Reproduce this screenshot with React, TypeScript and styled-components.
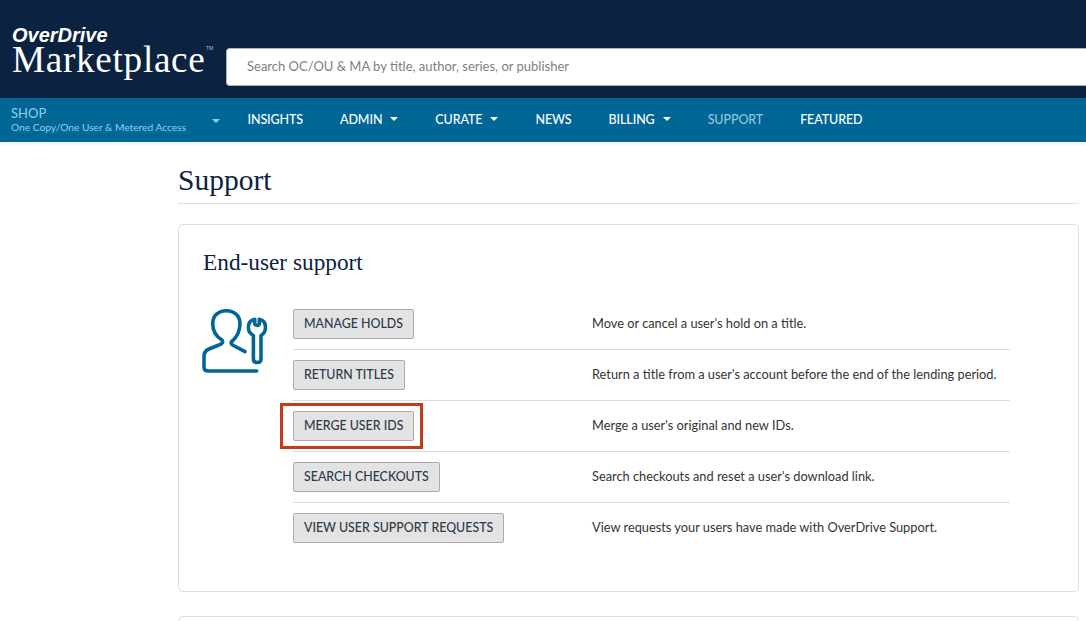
import styled, { createGlobalStyle } from 'styled-components';

const SANS = `Lato, "Liberation Sans", Arial, sans-serif`;
const SERIF = `"Liberation Serif", "Times New Roman", serif`;

const GlobalStyle = createGlobalStyle`
  html, body {
    margin: 0;
    padding: 0;
    background: #fff;
    overflow: hidden;
  }
  body {
    font-family: ${SANS};
    color: #333;
  }
  * {
    box-sizing: border-box;
  }
`;

const Page = styled.div`
  width: 1086px;
  height: 621px;
  overflow: hidden;
`;

const Masthead = styled.header`
  height: 98px;
  background: #0b2341;
  display: flex;
  align-items: flex-start;
  padding: 0 0 0 12px;
`;

const Logo = styled.div`
  width: 214px;
  flex: none;
  padding-top: 28px;
  color: #fff;
  position: relative;
`;

const LogoBrand = styled.div`
  font-family: "Liberation Sans", Arial, sans-serif;
  font-weight: 700;
  font-style: italic;
  font-size: 20px;
  line-height: 15px;
`;

const LogoName = styled.div`
  display: inline-block;
  font-family: ${SERIF};
  font-size: 37.2px;
  line-height: 33px;
  letter-spacing: 0.7px;
`;

const TradeMark = styled.span`
  position: absolute;
  left: 194px;
  top: 45px;
  font-family: "Liberation Sans", Arial, sans-serif;
  font-size: 5px;
  line-height: 6px;
  color: #b9c2cc;
`;

const SearchBox = styled.input`
  flex: none;
  width: 880px;
  height: 38px;
  margin-top: 48px;
  padding: 0 20px 2px;
  background: #fff;
  border: 1px solid #b5b5b5;
  border-right: none;
  border-radius: 4px 0 0 4px;
  font-family: ${SANS};
  font-size: 13px;
  outline: none;
  &::placeholder {
    color: #808080;
    opacity: 1;
  }
`;

const NavBar = styled.nav`
  height: 44px;
  padding-bottom: 2px;
  background: #006696;
  display: flex;
  align-items: center;
  box-shadow: 0 2px 4px rgba(0, 0, 0, 0.08);
`;

const ShopMenu = styled.div`
  width: 229px;
  flex: none;
  padding-left: 11px;
  display: flex;
  align-items: center;
  color: #8fd0ef;
`;

const ShopText = styled.div`
  width: 201px;
`;

const ShopLabel = styled.div`
  font-size: 13px;
  line-height: 14px;
`;

const ShopSub = styled.div`
  margin-top: 1px;
  font-size: 10.2px;
  line-height: 12px;
  white-space: nowrap;
`;

const Caret = styled.span<{ $light?: boolean }>`
  display: inline-block;
  width: 0;
  height: 0;
  margin-top: ${(p) => (p.$light ? '4px' : '0')};
  border-left: 4px solid transparent;
  border-right: 4px solid transparent;
  border-top: 4px solid ${(p) => (p.$light ? '#8fd0ef' : '#fff')};
`;

const NavItem = styled.a<{ $muted?: boolean }>`
  display: inline-flex;
  align-items: center;
  gap: 8px;
  margin: 0 18.5px;
  font-size: 12.5px;
  font-weight: 500;
  letter-spacing: -0.1px;
  color: ${(p) => (p.$muted ? '#8fc4de' : '#fff')};
  white-space: nowrap;
`;

const Main = styled.main`
  padding: 0 7px 0 178px;
`;

const PageTitle = styled.h1`
  margin: 0;
  height: 62px;
  padding-top: 20px;
  border-bottom: 1px solid #e0e0e0;
  font-family: ${SERIF};
  font-weight: 400;
  font-size: 29.5px;
  line-height: 36px;
  color: #0b2341;
`;

const Card = styled.section`
  margin-top: 20px;
  height: 368px;
  padding: 23px 24px 24px;
  border: 1px solid #dedede;
  border-radius: 5px;
  background: #fff;
`;

const CardTitle = styled.h2`
  margin: 0;
  font-family: ${SERIF};
  font-weight: 400;
  font-size: 23.3px;
  line-height: 28px;
  color: #0b2341;
`;

const CardBody = styled.div`
  display: flex;
  margin-top: 23px;
`;

const IconSlot = styled.div`
  width: 90px;
  flex: none;
  padding-top: 9px;
  margin-left: -1px;
  margin-right: 1px;
`;

const RowList = styled.div`
  width: 717px;
`;

const Row = styled.div<{ $last?: boolean }>`
  height: 51px;
  display: flex;
  align-items: center;
  border-bottom: 1px solid ${(p) => (p.$last ? 'transparent' : '#dcdcdc')};
`;

const ButtonCell = styled.div`
  width: 299px;
  flex: none;
  position: relative;
`;

const ActionButton = styled.button`
  display: block;
  height: 30px;
  padding: 0 10px 2px;
  background: #e3e3e3;
  border: 1px solid #ababab;
  border-radius: 2px;
  font-family: ${SANS};
  font-size: 12.4px;
  font-weight: 500;
  color: #2d3a4a;
  white-space: nowrap;
`;

const Highlight = styled.div`
  position: absolute;
  left: -13px;
  top: -8px;
  width: 143px;
  height: 46px;
  border: 3px solid #c23c17;
  pointer-events: none;
`;

const Description = styled.div`
  padding-bottom: 2px;
  font-size: 12.8px;
  color: #333;
  white-space: nowrap;
`;

const NextCard = styled.section`
  margin-top: 24px;
  height: 40px;
  border: 1px solid #dedede;
  border-radius: 5px;
`;

const UserWrenchIcon = () => (
  <svg width="66" height="66" viewBox="0 0 66 66" fill="none" stroke="#006696" strokeWidth="3.6" strokeLinecap="round" strokeLinejoin="round">
    <path d="M29.700 33.700C35 29 38 23 38 15.500C38 7.500 32 2.700 24.300 2.700C16.500 2.700 10.700 7.500 10.700 15.500C10.700 23 14 28.500 20 32C21.500 34.500 20 36 17 37L7 41C3.500 42.500 2 45 2 48V59C2 62 3.500 63 6 63H54.700" />
    <path d="M29.700 33.700C28.500 35.500 29.500 36.500 31.500 37.500L43 43.700" />
    <path d="M52.700 11.200C48.500 12 46.400 15.500 46.400 19.500C46.400 23 48 25.700 51.400 27.500V51C51.400 53.500 53 54.500 55.200 54.500C57.500 54.500 59 53.500 59 51V27.500C62 25.700 63.500 23 63.500 19.500C63.500 15.500 61.500 12 57.300 11.200V15.500C57.300 18 52.700 18 52.700 15.500Z" />
  </svg>
);

const rows = [
  { label: 'MANAGE HOLDS', text: "Move or cancel a user's hold on a title." },
  { label: 'RETURN TITLES', text: "Return a title from a user's account before the end of the lending period." },
  { label: 'MERGE USER IDS', text: "Merge a user's original and new IDs.", highlighted: true },
  { label: 'SEARCH CHECKOUTS', text: "Search checkouts and reset a user's download link." },
  { label: 'VIEW USER SUPPORT REQUESTS', text: 'View requests your users have made with OverDrive Support.' },
];

export default function App() {
  return (
    <Page>
      <GlobalStyle />
      <Masthead>
        <Logo>
          <LogoBrand>OverDrive</LogoBrand>
          <LogoName>Marketplace</LogoName>
          <TradeMark>TM</TradeMark>
        </Logo>
        <SearchBox placeholder="Search OC/OU & MA by title, author, series, or publisher" />
      </Masthead>
      <NavBar>
        <ShopMenu>
          <ShopText>
            <ShopLabel>SHOP</ShopLabel>
            <ShopSub>One Copy/One User &amp; Metered Access</ShopSub>
          </ShopText>
          <Caret $light />
        </ShopMenu>
        <NavItem>INSIGHTS</NavItem>
        <NavItem>ADMIN <Caret /></NavItem>
        <NavItem>CURATE <Caret /></NavItem>
        <NavItem>NEWS</NavItem>
        <NavItem>BILLING <Caret /></NavItem>
        <NavItem $muted>SUPPORT</NavItem>
        <NavItem>FEATURED</NavItem>
      </NavBar>
      <Main>
        <PageTitle>Support</PageTitle>
        <Card>
          <CardTitle>End-user support</CardTitle>
          <CardBody>
            <IconSlot>
              <UserWrenchIcon />
            </IconSlot>
            <RowList>
              {rows.map((row, i) => (
                <Row key={row.label} $last={i === rows.length - 1}>
                  <ButtonCell>
                    <ActionButton>{row.label}</ActionButton>
                    {row.highlighted && <Highlight />}
                  </ButtonCell>
                  <Description>{row.text}</Description>
                </Row>
              ))}
            </RowList>
          </CardBody>
        </Card>
        <NextCard />
      </Main>
    </Page>
  );
}
